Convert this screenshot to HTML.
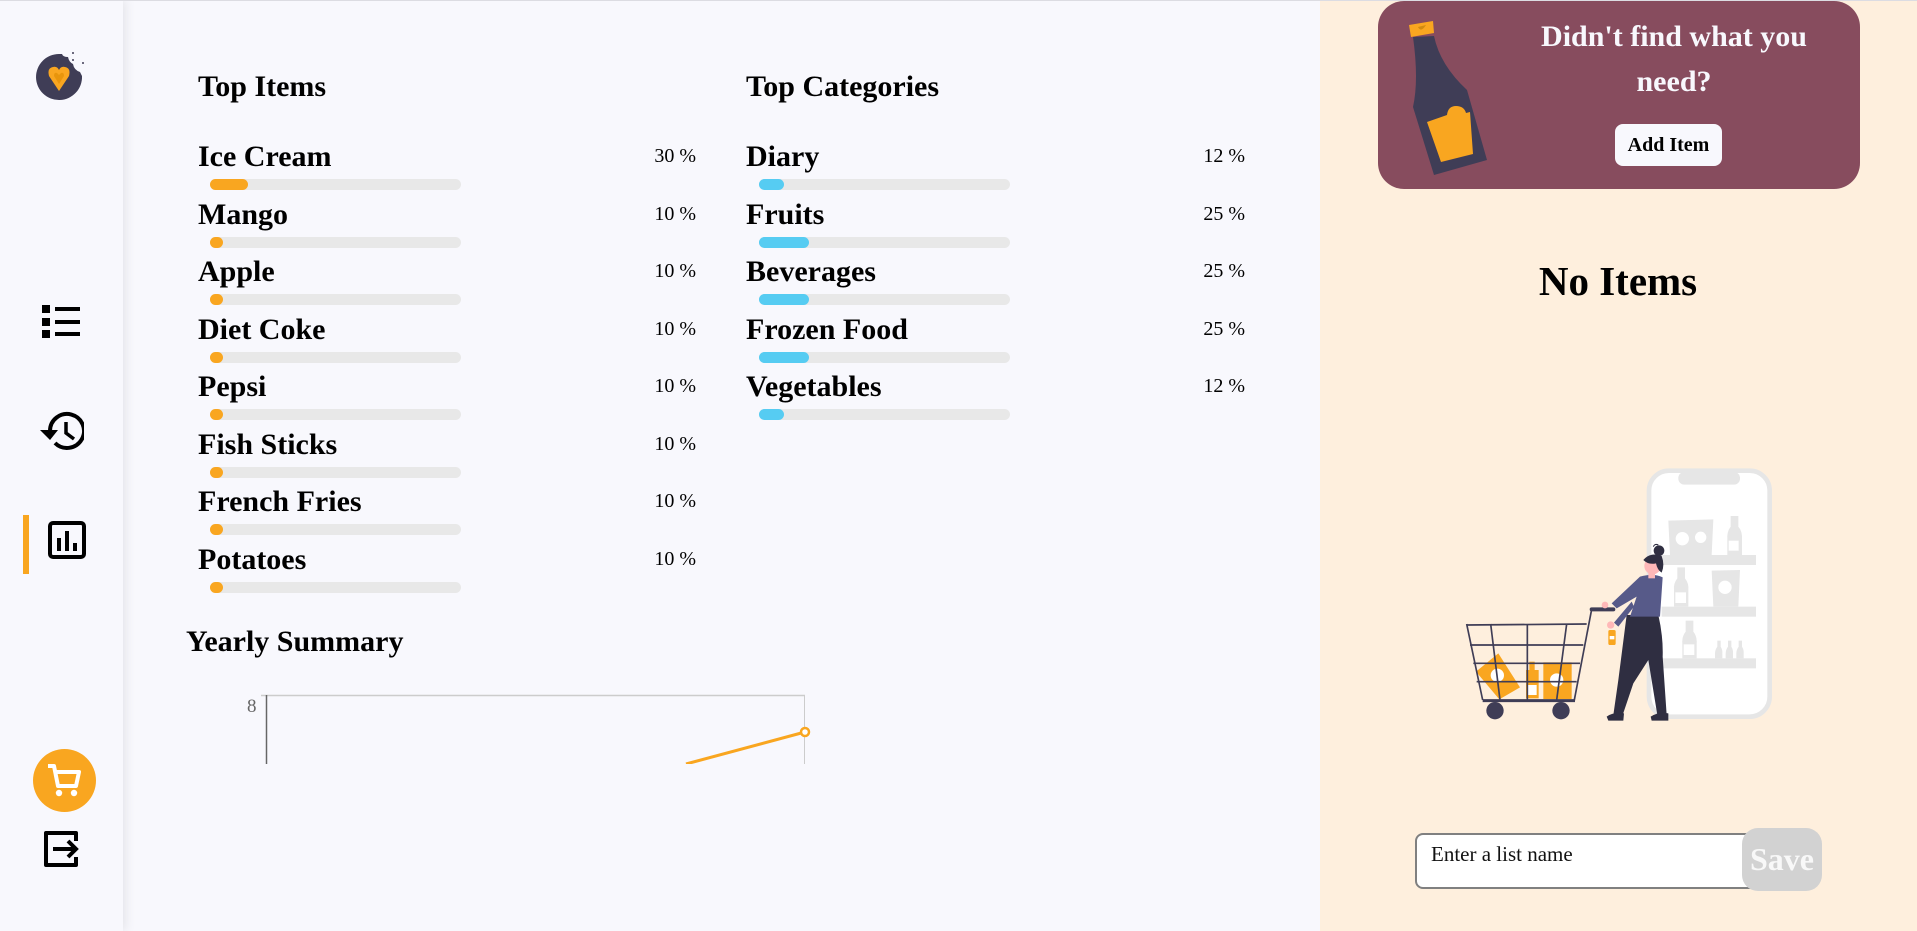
<!DOCTYPE html>
<html><head><meta charset="utf-8"><style>
*{margin:0;padding:0;box-sizing:border-box}
body{width:1917px;height:931px;overflow:hidden;background:#f8f8fd;font-family:"Liberation Serif",serif;position:relative}
.a{position:absolute}
.side{left:0;top:0;width:123px;height:931px;background:#f8f8fd;box-shadow:3px 0 10px rgba(0,0,0,.08);z-index:2}
.topline{left:0;top:0;width:1917px;height:1px;background:#dcdce2;z-index:3}
.h{font-weight:bold;font-size:30px;line-height:36px;color:#000;white-space:nowrap}
.n{font-weight:bold;font-size:30px;line-height:36px;white-space:nowrap}
.p{font-size:20px;line-height:24px;white-space:nowrap;text-align:right;width:60px}
.tr{height:11px;border-radius:6px;background:#e8e8e8;width:251px}
.f{position:absolute;left:0;top:0;height:11px;border-radius:6px}
.o{background:#f9a620}.b{background:#56ccf2}
.right{left:1320px;top:0;width:597px;height:931px;background:#feefdd}
</style></head><body>
<div class="a topline"></div>
<div class="a side">
<svg class="a" style="left:30px;top:46px" width="60" height="60" viewBox="30 46 60 60">
<path d="M59 54 A23 23 0 1 0 82 76 L80 72 Q74 70 73 64 Q69 62 68 57 Q63 57 62 54 Z" fill="#3f3d56"/>
<circle cx="73" cy="53" r="1" fill="#3f3d56"/><circle cx="73" cy="60" r="1" fill="#3f3d56"/><circle cx="83" cy="63" r="1" fill="#3f3d56"/>
<path d="M59 91 L49 76 Q47 68 53 67 Q57 66 59 70 Q61 66 65 67 Q71 68 69 76 Z" fill="#f9a620"/>
<path d="M59 84 L54 76 Q54 72 57 73 L59 75 L61 73 Q64 72 64 76 Z" fill="#e8950c"/>
</svg>
<svg class="a" style="left:40px;top:304px" width="42" height="36" viewBox="0 0 42 36"><rect x="2" y="1" width="8" height="8" fill="#000"/><rect x="2" y="14" width="8" height="8" fill="#000"/><rect x="2" y="26" width="8" height="8" fill="#000"/><rect x="15" y="3" width="25" height="4" fill="#000"/><rect x="15" y="16" width="25" height="4" fill="#000"/><rect x="15" y="28" width="25" height="4" fill="#000"/></svg>
<svg class="a" style="left:38px;top:410px" width="46" height="42" viewBox="0 0 46 42"><path d="M12 21 A17 17 0 1 1 17 33" fill="none" stroke="#000" stroke-width="4"/><path d="M2 20 L12 30 L20 20 Z" fill="#000"/><path d="M28 12 V23 L36 29" fill="none" stroke="#000" stroke-width="3.5"/></svg>
<div class="a" style="left:23px;top:515px;width:6px;height:59px;background:#f9a620"></div>
<svg class="a" style="left:48px;top:521px" width="38" height="38" viewBox="0 0 38 38"><rect x="2" y="2" width="34" height="34" rx="3" fill="none" stroke="#000" stroke-width="4"/><rect x="9" y="17" width="4" height="13" fill="#000"/><rect x="17" y="10" width="4" height="20" fill="#000"/><rect x="25" y="22" width="4" height="8" fill="#000"/></svg>
<div class="a" style="left:33px;top:749px;width:63px;height:63px;border-radius:50%;background:#f9a620"></div>
<svg class="a" style="left:45px;top:762px" width="38" height="38" viewBox="0 0 38 38"><path d="M3 4 H9 L13 24 H31 L34 10 H11" fill="none" stroke="#fff" stroke-width="4" stroke-linejoin="round"/><circle cx="14" cy="31" r="3.2" fill="#fff"/><circle cx="29" cy="31" r="3.2" fill="#fff"/></svg>
<svg class="a" style="left:42px;top:829px" width="40" height="40" viewBox="0 0 40 40"><path d="M34 12 V4 H4 V36 H34 V28" fill="none" stroke="#000" stroke-width="4" stroke-linejoin="round"/><path d="M11 20 H34 M26 12 L34 20 L26 28" fill="none" stroke="#000" stroke-width="4"/></svg>
</div>

<div class="a h" style="left:198px;top:69px">Top Items</div>
<div class="a h" style="left:746px;top:69px">Top Categories</div>

<div class="a n" style="left:198px;top:139px">Ice Cream</div><div class="a p" style="left:636px;top:144px">30 %</div><div class="a tr" style="left:210px;top:179px"><div class="f o" style="width:38px"></div></div>
<div class="a n" style="left:198px;top:197px">Mango</div><div class="a p" style="left:636px;top:202px">10 %</div><div class="a tr" style="left:210px;top:237px"><div class="f o" style="width:13px"></div></div>
<div class="a n" style="left:198px;top:254px">Apple</div><div class="a p" style="left:636px;top:259px">10 %</div><div class="a tr" style="left:210px;top:294px"><div class="f o" style="width:13px"></div></div>
<div class="a n" style="left:198px;top:312px">Diet Coke</div><div class="a p" style="left:636px;top:317px">10 %</div><div class="a tr" style="left:210px;top:352px"><div class="f o" style="width:13px"></div></div>
<div class="a n" style="left:198px;top:369px">Pepsi</div><div class="a p" style="left:636px;top:374px">10 %</div><div class="a tr" style="left:210px;top:409px"><div class="f o" style="width:13px"></div></div>
<div class="a n" style="left:198px;top:427px">Fish Sticks</div><div class="a p" style="left:636px;top:432px">10 %</div><div class="a tr" style="left:210px;top:467px"><div class="f o" style="width:13px"></div></div>
<div class="a n" style="left:198px;top:484px">French Fries</div><div class="a p" style="left:636px;top:489px">10 %</div><div class="a tr" style="left:210px;top:524px"><div class="f o" style="width:13px"></div></div>
<div class="a n" style="left:198px;top:542px">Potatoes</div><div class="a p" style="left:636px;top:547px">10 %</div><div class="a tr" style="left:210px;top:582px"><div class="f o" style="width:13px"></div></div>

<div class="a n" style="left:746px;top:139px">Diary</div><div class="a p" style="left:1185px;top:144px">12 %</div><div class="a tr" style="left:759px;top:179px"><div class="f b" style="width:25px"></div></div>
<div class="a n" style="left:746px;top:197px">Fruits</div><div class="a p" style="left:1185px;top:202px">25 %</div><div class="a tr" style="left:759px;top:237px"><div class="f b" style="width:50px"></div></div>
<div class="a n" style="left:746px;top:254px">Beverages</div><div class="a p" style="left:1185px;top:259px">25 %</div><div class="a tr" style="left:759px;top:294px"><div class="f b" style="width:50px"></div></div>
<div class="a n" style="left:746px;top:312px">Frozen Food</div><div class="a p" style="left:1185px;top:317px">25 %</div><div class="a tr" style="left:759px;top:352px"><div class="f b" style="width:50px"></div></div>
<div class="a n" style="left:746px;top:369px">Vegetables</div><div class="a p" style="left:1185px;top:374px">12 %</div><div class="a tr" style="left:759px;top:409px"><div class="f b" style="width:25px"></div></div>

<div class="a h" style="left:186px;top:624px">Yearly Summary</div>
<svg class="a" style="left:240px;top:690px" width="580" height="74" viewBox="240 690 580 74">
<text x="247" y="712" font-family="Liberation Serif,serif" font-size="19" fill="#666">8</text>
<line x1="261" y1="695.5" x2="805" y2="695.5" stroke="#ccc" stroke-width="1.5"/>
<line x1="266.5" y1="695" x2="266.5" y2="764" stroke="#666" stroke-width="1.5"/>
<line x1="804.5" y1="695" x2="804.5" y2="764" stroke="#ccc" stroke-width="1"/>
<line x1="686" y1="764" x2="805" y2="732" stroke="#f9a620" stroke-width="3"/>
<circle cx="805" cy="732" r="4" fill="#fff" stroke="#f9a620" stroke-width="2.5"/>
</svg>

<div class="a right"></div>
<div class="a" style="left:1378px;top:1px;width:482px;height:188px;border-radius:26px;background:#874c5e"></div>
<svg class="a" style="left:1400px;top:15px" width="100" height="170" viewBox="1400 15 100 170">
<path d="M1413 37 L1434 36 Q1440 65 1467 90 L1487 160 L1434 175 L1413 107 Q1419 80 1413 37 Z" fill="#3f3d56"/>
<path d="M1427 122 L1447 115 Q1448 106 1456 106 Q1464 106 1466 113 L1470 112 L1473 154 L1441 162 Z" fill="#f9a620"/>
<path d="M1409 25 L1433 21 L1434 33 L1411 37 Z" fill="#f9a620"/>
<path d="M1418 27 Q1421 33 1426 25 Z" fill="#d18a10"/>
</svg>
<div class="a" style="left:1500px;top:14px;width:348px;text-align:center;color:#f8f8fd;font-weight:bold;font-size:30px;line-height:45px">Didn't find what you need?</div>
<div class="a" style="left:1615px;top:124px;width:107px;height:42px;border-radius:8px;background:#f8f8fd;text-align:center;font-weight:bold;font-size:20px;line-height:42px">Add Item</div>
<div class="a" style="left:1418px;top:255px;width:400px;text-align:center;font-weight:bold;font-size:41px;line-height:52px">No Items</div>

<svg class="a" style="left:1440px;top:450px" width="360" height="290" viewBox="0 0 1080 870">
<rect x="627" y="62" width="362" height="738" rx="60" fill="#fff" stroke="#e6e6e6" stroke-width="14"/>
<rect x="715" y="66" width="185" height="38" rx="18" fill="#e6e6e6"/>
<g fill="#e6e6e6">
<rect x="665" y="315" width="283" height="30"/><rect x="665" y="470" width="283" height="30"/><rect x="665" y="625" width="283" height="30"/>
<path d="M685 212 L820 208 L815 315 L690 315 Z"/>
<path d="M872 198 H895 V230 Q908 245 906 270 V315 H862 V270 Q860 245 872 230 Z"/>
<path d="M712 352 H735 V385 Q747 400 745 420 V470 H702 V420 Q700 400 712 385 Z"/>
<path d="M815 362 L900 360 L895 470 L820 470 Z"/>
<path d="M737 512 H760 V545 Q772 560 770 580 V625 H727 V580 Q725 560 737 545 Z"/>
<path d="M832 572 H842 V590 Q848 600 847 610 V625 H825 V610 Q825 600 832 590 Z"/>
<path d="M864 572 H874 V590 Q880 600 879 610 V625 H857 V610 Q857 600 864 590 Z"/>
<path d="M896 572 H906 V590 Q912 600 911 610 V625 H889 V610 Q889 600 896 590 Z"/>
</g>
<g fill="#fff"><circle cx="727" cy="266" r="20"/><circle cx="782" cy="262" r="17"/><circle cx="855" cy="412" r="20"/><rect x="866" y="272" width="30" height="30"/><rect x="706" y="427" width="32" height="32"/><rect x="731" y="583" width="32" height="32"/></g>
<g fill="#f9a620">
<path d="M108 665 L175 610 L240 712 L178 748 Z"/>
<rect x="258" y="660" width="38" height="85"/><rect x="268" y="635" width="16" height="30"/>
<rect x="310" y="637" width="85" height="110"/>
<rect x="505" y="540" width="22" height="45" rx="5"/>
</g>
<g fill="#fff"><circle cx="172" cy="676" r="20"/><circle cx="350" cy="690" r="20"/><rect x="264" y="705" width="26" height="30"/><rect x="509" y="558" width="14" height="10"/></g>
<g stroke="#3f3d56" stroke-width="5" fill="none">
<path d="M80 525 L440 522"/><path d="M90 585 L430 585"/><path d="M100 640 L420 640"/><path d="M110 695 L410 695"/>
<path d="M80 522 L128 750"/><path d="M152 522 L180 750"/><path d="M262 522 L262 750"/><path d="M380 522 L350 750"/>
<path d="M455 478 L402 755"/>
<path d="M128 752 L405 752" stroke-width="9"/>
</g>
<path d="M455 478 H520" stroke="#3f3d56" stroke-width="12" stroke-linecap="round"/>
<circle cx="165" cy="782" r="26" fill="#3f3d56"/><circle cx="363" cy="782" r="26" fill="#3f3d56"/>
<path d="M560 495 L655 495 Q670 560 668 620 L680 795 L652 795 L625 630 L580 700 L548 795 L520 795 L535 690 Z" fill="#2f2e41"/>
<path d="M500 800 Q520 785 552 790 L550 812 L505 812 Z" fill="#2f2e41"/><path d="M632 800 Q655 785 685 790 L685 812 L635 812 Z" fill="#2f2e41"/>
<path d="M600 380 Q640 368 668 382 L660 500 L570 500 L590 440 L530 475 L515 460 Z" fill="#575a89"/>
<path d="M582 470 L535 530 L522 518 L575 455 Z" fill="#575a89"/>
<circle cx="512" cy="525" r="11" fill="#ffb8b8"/><circle cx="495" cy="465" r="10" fill="#ffb8b8"/>
<circle cx="638" cy="348" r="25" fill="#ffb8b8"/><rect x="625" y="360" width="20" height="25" fill="#ffb8b8"/>
<path d="M610 330 Q630 305 665 318 Q675 345 665 368 Q652 360 648 340 Q625 345 610 330 Z" fill="#2f2e41"/>
<circle cx="657" cy="302" r="16" fill="#2f2e41"/>
<path d="M640 290 Q645 280 655 285" stroke="#2f2e41" stroke-width="3" fill="none"/>
</svg>

<div class="a" style="left:1415px;top:833px;width:352px;height:56px;border:2px solid #808080;border-radius:8px;background:#fff"></div>
<div class="a" style="left:1431px;top:841px;font-size:21px;line-height:26px;color:#111">Enter a list name</div>
<div class="a" style="left:1742px;top:828px;width:80px;height:63px;border-radius:16px;background:#d2d2d2;color:#f8f8f8;font-weight:bold;font-size:32px;line-height:63px;text-align:center">Save</div>
</body></html>
